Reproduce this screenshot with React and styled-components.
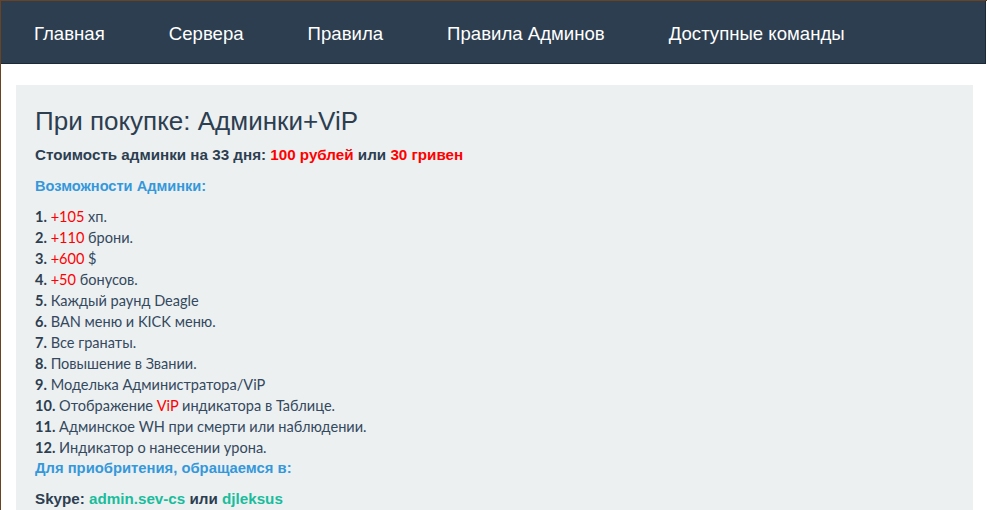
import React from "react";
import styled, { createGlobalStyle } from "styled-components";

const Global = createGlobalStyle`
  html, body { margin: 0; padding: 0; background: #ffffff; }
  body { font-family: "Liberation Sans", Arial, sans-serif; }
  * { box-sizing: border-box; }
`;

const Page = styled.div`
  min-height: 510px;
  border-top: 1px solid #6b4322;
  border-left: 1px solid #6b4322;
  background: #ffffff;
`;

const Nav = styled.nav`
  height: 63px;
  margin-right: 1px;
  background: #2c3e50;
  border-bottom: 1px solid #1c2936;
  border-right: 1px solid #1c2936;
  display: flex;
  align-items: center;
  padding: 3px 0 0 1px;
`;

const NavLink = styled.a`
  display: block;
  padding: 0 32px;
  color: #ffffff;
  font-family: "Liberation Sans", Arial, sans-serif;
  font-size: 18.6px;
  line-height: 20px;
  text-decoration: none;
  white-space: nowrap;
`;

const Wrap = styled.main`
  padding: 21px 14px 0 15px;
`;

const Box = styled.section`
  background: #ecf0f1;
  min-height: 430px;
  padding: 21px 19px 0 19px;
  color: #2c3e50;
`;

const Title = styled.h1`
  margin: 0;
  font-family: "Liberation Sans", Arial, sans-serif;
  font-weight: 400;
  font-size: 26px;
  line-height: 30px;
  color: #2c3e50;
`;

const Para = styled.p`
  margin: ${(p) => p.$mt ?? 10}px 0 0 0;
  font-family: "Liberation Sans", Arial, sans-serif;
  font-weight: 700;
  font-size: ${(p) => p.$size || 14.8}px;
  line-height: 20px;
  color: ${(p) => p.$color || "#2c3e50"};
`;

const Accent = styled.span`
  color: ${(p) => p.$color};
`;

const List = styled.ol`
  list-style: none;
  margin: 10px 0 0 0;
  padding: 0;
`;

const Item = styled.li`
  font-family: Lato, "Open Sans", sans-serif;
  font-size: 14.55px;
  line-height: 21px;
  color: #34495e;
`;

const Num = styled.b`
  font-weight: 700;
  color: #2c3e50;
`;

const navItems = ["Главная", "Сервера", "Правила", "Правила Админов", "Доступные команды"];

const RED = "#ff0000";
const items = [
  [<Accent $color={RED} key="a">+105</Accent>, " хп."],
  [<Accent $color={RED} key="a">+110</Accent>, " брони."],
  [<Accent $color={RED} key="a">+600</Accent>, " $"],
  [<Accent $color={RED} key="a">+50</Accent>, " бонусов."],
  ["Каждый раунд Deagle"],
  ["BAN меню и KICK меню."],
  ["Все гранаты."],
  ["Повышение в Звании."],
  ["Моделька Администратора/ViP"],
  ["Отображение ", <Accent $color={RED} key="a">ViP</Accent>, " индикатора в Таблице."],
  ["Админское WH при смерти или наблюдении."],
  ["Индикатор о нанесении урона."],
];

export default function App() {
  return (
    <>
      <Global />
      <Page>
        <Nav>
          {navItems.map((t) => (
            <NavLink key={t} href="#">{t}</NavLink>
          ))}
        </Nav>
        <Wrap>
          <Box>
            <Title>При покупке: Админки+ViP</Title>
            <Para $mt={9} $size={15.2}>
              Стоимость админки на 33 дня: <Accent $color={RED}>100 рублей</Accent> или{" "}
              <Accent $color={RED}>30 гривен</Accent>
            </Para>
            <Para $mt={11} $size={14.6} $color="#3498db">Возможности Админки:</Para>
            <List>
              {items.map((parts, i) => (
                <Item key={i}>
                  <Num>{i + 1}.</Num> {parts}
                </Item>
              ))}
            </List>
            <Para $mt={0} $color="#3498db">Для приобритения, обращаемся в:</Para>
            <Para $mt={11} $size={15.2}>
              Skype: <Accent $color="#1abc9c">admin.sev-cs</Accent> или{" "}
              <Accent $color="#1abc9c">djleksus</Accent>
            </Para>
          </Box>
        </Wrap>
      </Page>
    </>
  );
}
